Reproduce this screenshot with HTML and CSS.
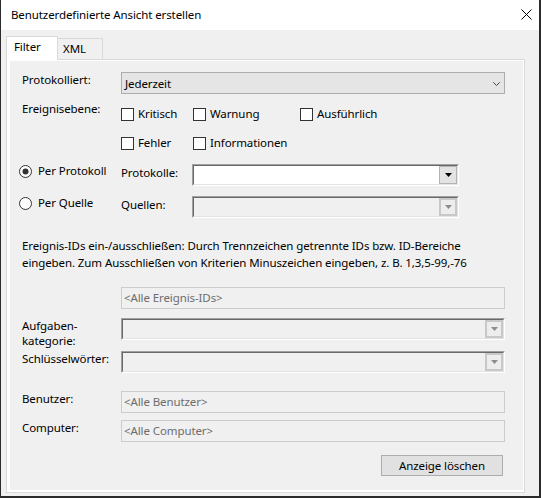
FILE: index.html
```html
<!DOCTYPE html>
<html lang="de">
<head>
<meta charset="utf-8">
<title>Benutzerdefinierte Ansicht erstellen</title>
<link rel="stylesheet" href="styles.css">
</head>
<body>
<div class="window">
  <header class="titlebar">
    <span class="title">Benutzerdefinierte Ansicht erstellen</span>
    <svg class="close" width="11" height="11" viewBox="0 0 11 11"><path d="M0.5 0.5L10.5 10.5M10.5 0.5L0.5 10.5" stroke="#000" stroke-width="1" fill="none"/></svg>
  </header>
  <div class="client">
    <div class="tabs">
      <div class="tab active">Filter</div>
      <div class="tab xml">XML</div>
    </div>
    <div class="page">
      <div class="page-inner">
        <div class="row r-logged">
          <span class="lbl">Protokolliert:</span>
          <div class="select"><span>Jederzeit</span><svg width="7" height="4" viewBox="0 0 7 4"><path d="M0.3 0.3L3.5 3.5L6.7 0.3" stroke="#444" stroke-width="1" fill="none"/></svg></div>
        </div>
        <div class="row r-level">
          <span class="lbl">Ereignisebene:</span>
          <div class="checks">
            <div class="chk"><span class="box"></span><span class="t">Kritisch</span></div>
            <div class="chk"><span class="box"></span><span class="t">Warnung</span></div>
            <div class="chk"><span class="box"></span><span class="t">Ausführlich</span></div>
            <div class="chk"><span class="box"></span><span class="t">Fehler</span></div>
            <div class="chk"><span class="box"></span><span class="t">Informationen</span></div>
          </div>
        </div>
        <div class="row r-src">
          <div class="opt"><svg width="13" height="13" viewBox="0 0 13 13"><circle cx="6.5" cy="6.5" r="6" fill="#fff" stroke="#333"/><circle cx="6.5" cy="6.5" r="3" fill="#333"/></svg><span>Per Protokoll</span></div>
          <span class="lbl2">Protokolle:</span>
          <div class="combo"><div class="combo-in"><div class="ddbtn"><svg width="7" height="4" viewBox="0 0 7 4"><path d="M0 0H7L3.5 4Z" fill="#000"/></svg></div></div></div>
        </div>
        <div class="row r-src2">
          <div class="opt"><svg width="13" height="13" viewBox="0 0 13 13"><circle cx="6.5" cy="6.5" r="6" fill="#fff" stroke="#333"/></svg><span>Per Quelle</span></div>
          <span class="lbl2">Quellen:</span>
          <div class="combo disabled"><div class="combo-in"><div class="ddbtn"><svg width="7" height="4" viewBox="0 0 7 4"><path d="M0 0H7L3.5 4Z" fill="#8c8c8c"/></svg></div></div></div>
        </div>
        <p class="desc">Ereignis-IDs ein-/ausschließen: Durch Trennzeichen getrennte IDs bzw. ID-Bereiche<br>eingeben. Zum Ausschließen von Kriterien Minuszeichen eingeben, z. B. 1,3,5-99,-76</p>
        <div class="row r-ids">
          <span class="lbl"></span>
          <div class="textbox">&lt;Alle Ereignis-IDs&gt;</div>
        </div>
        <div class="row r-task">
          <span class="lbl two">Aufgaben-<br>kategorie:</span>
          <div class="combo wide disabled"><div class="combo-in"><div class="ddbtn"><svg width="7" height="4" viewBox="0 0 7 4"><path d="M0 0H7L3.5 4Z" fill="#8c8c8c"/></svg></div></div></div>
        </div>
        <div class="row r-key">
          <span class="lbl">Schlüsselwörter:</span>
          <div class="combo wide disabled"><div class="combo-in"><div class="ddbtn"><svg width="7" height="4" viewBox="0 0 7 4"><path d="M0 0H7L3.5 4Z" fill="#8c8c8c"/></svg></div></div></div>
        </div>
        <div class="row r-user">
          <span class="lbl">Benutzer:</span>
          <div class="textbox">&lt;Alle Benutzer&gt;</div>
        </div>
        <div class="row r-comp">
          <span class="lbl">Computer:</span>
          <div class="textbox">&lt;Alle Computer&gt;</div>
        </div>
        <div class="row r-btn">
          <button class="btn" type="button">Anzeige löschen</button>
        </div>
      </div>
    </div>
  </div>
</div>
</body>
</html>
```

FILE: styles.css
```css
* { box-sizing: border-box; }

body {
  margin: 0;
  font-family: "Noto Sans", "Open Sans", sans-serif;
  font-size: 11.5px;
  letter-spacing: -0.1px;
  line-height: 15px;
  color: #000;
  background: #f0f0f0;
}

.window {
  width: 541px;
  height: 498px;
  border-style: solid;
  border-color: #2b2b2b;
  border-width: 0 2px 2px 1px;
  background: #f0f0f0;
  display: flex;
  flex-direction: column;
}

.titlebar {
  flex: none;
  height: 30px;
  background: #fff;
  display: flex;
  justify-content: space-between;
  align-items: flex-start;
  padding-left: 10px;
}

.title { margin-top: 7px; }

.close { margin-top: 9px; margin-right: 7px; }

.client { padding: 6px 14px 0 5px; }

.tabs {
  display: flex;
  align-items: flex-end;
  height: 23px;
}

.tab {
  border: 1px solid #d9d9d9;
  border-bottom: none;
  background: #f0f0f0;
}

.tab.active {
  width: 52px;
  height: 24px;
  margin-bottom: -1px;
  padding: 2px 0 0 7px;
  background: #fff;
  position: relative;
  z-index: 1;
}

.tab.xml {
  width: 46px;
  height: 21px;
  margin-left: -1px;
  padding: 2px 0 0 5px;
}

.page {
  width: 519px;
  height: 434px;
  border: 1px solid #d9d9d9;
}

.page-inner {
  height: 100%;
  border-style: solid;
  border-color: #fff;
  border-width: 1px 1px 2px 3px;
}

.row {
  display: flex;
  align-items: flex-start;
  height: 22px;
}

.lbl {
  flex: none;
  width: 111px;
  padding-left: 12px;
}

.lbl.two { line-height: 14.5px; padding-top: 1px; }

.r-logged { margin-top: 11px; }

.select {
  width: 384px;
  height: 22px;
  border: 1px solid #adadad;
  background: #e5e5e5;
  display: flex;
  align-items: center;
  padding: 0 4px 0 3px;
}

.select svg { margin-left: auto; margin-top: 1px; }

.r-level { margin-top: 7px; height: auto; }

.checks {
  display: grid;
  grid-template-columns: 72px 107px auto;
  row-gap: 16px;
  margin-top: 7px;
}

.chk {
  display: flex;
  align-items: flex-start;
  height: 13px;
}

.box {
  flex: none;
  width: 13px;
  height: 13px;
  border: 1px solid #333;
  background: #fff;
}

.chk .t { margin-left: 4px; margin-top: -2px; white-space: nowrap; }

.r-src { margin-top: 14px; }
.r-src2 { margin-top: 10px; }

.opt {
  flex: none;
  width: 111px;
  padding-left: 9px;
  display: flex;
  align-items: flex-start;
}

.opt svg { flex: none; margin-top: 1px; }
.opt span { margin-left: 6px; margin-top: -1px; white-space: nowrap; }

.lbl2 { flex: none; width: 71px; padding-top: 1px; }

.combo {
  width: 267px;
  height: 22px;
  border: 1px solid;
  border-color: #a0a0a0 #fff #fff #a0a0a0;
}

.combo.wide { width: 384px; }

.combo-in {
  height: 100%;
  border: 1px solid;
  border-color: #696969 #e3e3e3 #e3e3e3 #696969;
  background: #fff;
  display: flex;
  justify-content: flex-end;
}

.combo.disabled .combo-in { background: #f0f0f0; }

.ddbtn {
  width: 18px;
  height: 100%;
  border: 1px solid #b4b4b4;
  background: #e3e3e3;
  display: flex;
  align-items: center;
  justify-content: center;
}

.combo.disabled .ddbtn {
  border: 2px solid #c8c8c8;
  background: #ededed;
}

.desc {
  margin: 19px 0 0;
  padding-left: 12px;
  line-height: 17px;
}

.r-ids { margin-top: 16px; }

.textbox {
  width: 384px;
  height: 22px;
  border: 1px solid #cccccc;
  background: #f0f0f0;
  color: #6d6d6d;
  padding-left: 2px;
  line-height: 19px;
}

.r-task { margin-top: 9px; }
.r-key { margin-top: 11px; }
.r-user { margin-top: 18px; }
.r-comp { margin-top: 7px; }

.r-btn {
  margin-top: 13px;
  height: 21px;
  justify-content: flex-end;
}

.btn {
  width: 122px;
  height: 21px;
  margin-right: 20px;
  padding: 0;
  border: 1px solid #adadad;
  background: #e1e1e1;
  font: inherit;
  letter-spacing: inherit;
  line-height: 19px;
  color: #000;
}
```
